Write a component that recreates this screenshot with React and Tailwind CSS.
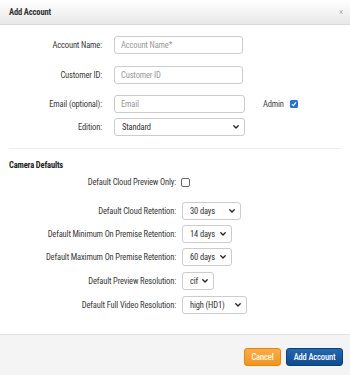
import React from "react";

function Chevron() {
  return (
    <svg width="6" height="4" viewBox="0 0 6 4" className="shrink-0">
      <path d="M0.8 0.8 L3 3 L5.2 0.8" fill="none" stroke="#222" strokeWidth="1.3" strokeLinecap="round" strokeLinejoin="round" />
    </svg>
  );
}

function Input({ placeholder, w }) {
  return (
    <div className={`${w} h-[18px] border border-[#ccc] rounded-[3px] bg-white flex items-center pl-[6px] text-[#9a9a9a]`}>
      {placeholder}
    </div>
  );
}

function Select({ value, w }) {
  return (
    <div className={`${w} h-[18px] border border-[#ccc] rounded-[3px] bg-white flex items-center justify-between pl-[7px] pr-[5px] text-[#333]`}>
      <span>{value}</span>
      <Chevron />
    </div>
  );
}

function TopRow({ label, children, className = "" }) {
  return (
    <div className={`flex items-center ${className}`}>
      <div className="w-[102px] text-right shrink-0">{label}</div>
      <div className="ml-[12px] flex items-center">{children}</div>
    </div>
  );
}

function CamRow({ label, children, className = "" }) {
  return (
    <div className={`flex items-center ${className}`}>
      <div className="w-[176px] text-right shrink-0">{label}</div>
      <div className="ml-[6px] flex items-center">{children}</div>
    </div>
  );
}

export default function App() {
  return (
    <div className="w-[350px] h-[375px] bg-white flex flex-col font-['Roboto_Condensed','Roboto',sans-serif] text-[8.5px] tracking-[-0.15px] text-[#3a3a3a] leading-[10px]">
      <div className="h-[25px] shrink-0 border-b border-[#d9d9d9] bg-gradient-to-b from-white to-[#e8e8e8] flex items-center justify-between pl-[9px] pr-[7px]">
        <span className="font-bold text-[#333]">Add Account</span>
        <span className="text-[#aaa] text-[9px]">×</span>
      </div>

      <div className="flex-1 flex flex-col">
        <TopRow label="Account Name:" className="mt-[11px]">
          <Input placeholder="Account Name*" w="w-[129px]" />
        </TopRow>
        <TopRow label="Customer ID:" className="mt-[12px]">
          <Input placeholder="Customer ID" w="w-[129px]" />
        </TopRow>
        <TopRow label="Email (optional):" className="mt-[11px]">
          <Input placeholder="Email" w="w-[131px]" />
          <span className="ml-[18px] text-[#444]">Admin</span>
          <span className="ml-[6px] w-[8px] h-[8px] rounded-[1.5px] bg-[#1a73e8] flex items-center justify-center">
            <svg width="6" height="6" viewBox="0 0 6 6">
              <path d="M1 3.2 L2.4 4.6 L5 1.4" fill="none" stroke="white" strokeWidth="1.2" />
            </svg>
          </span>
        </TopRow>
        <TopRow label="Edition:" className="mt-[5px]">
          <Select value="Standard" w="w-[131px]" />
        </TopRow>

        <div className="mt-[12px] mx-[9px] border-t border-[#ececec]" />

        <div className="mt-[11px] pl-[9px] font-bold text-[#222]">Camera Defaults</div>

        <CamRow label="Default Cloud Preview Only:" className="mt-[7px]">
          <span className="-ml-[1px] w-[9px] h-[9px] rounded-[2px] border border-[#666] bg-white" />
        </CamRow>
        <CamRow label="Default Cloud Retention:" className="mt-[15px]">
          <Select value="30 days" w="w-[59px]" />
        </CamRow>
        <CamRow label="Default Minimum On Premise Retention:" className="mt-[5px]">
          <Select value="14 days" w="w-[50px]" />
        </CamRow>
        <CamRow label="Default Maximum On Premise Retention:" className="mt-[5px]">
          <Select value="60 days" w="w-[50px]" />
        </CamRow>
        <CamRow label="Default Preview Resolution:" className="mt-[6px]">
          <Select value="cif" w="w-[32px]" />
        </CamRow>
        <CamRow label="Default Full Video Resolution:" className="mt-[6px]">
          <Select value="high (HD1)" w="w-[65px]" />
        </CamRow>
      </div>

      <div className="h-[41px] shrink-0 border-t border-[#e3e3e3] bg-[#f4f4f4] flex justify-end items-start pt-[13px] pr-[7px] gap-[5px]">
        <div className="w-[37px] h-[18px] rounded-[3px] border border-[#e5870f] bg-gradient-to-b from-[#fbac42] to-[#f59417] text-white font-medium flex items-center justify-center">
          Cancel
        </div>
        <div className="w-[57px] h-[18px] rounded-[3px] border border-[#0d3f7a] bg-gradient-to-b from-[#2168b2] to-[#0e4b91] text-white font-medium flex items-center justify-center">
          Add Account
        </div>
      </div>
    </div>
  );
}
